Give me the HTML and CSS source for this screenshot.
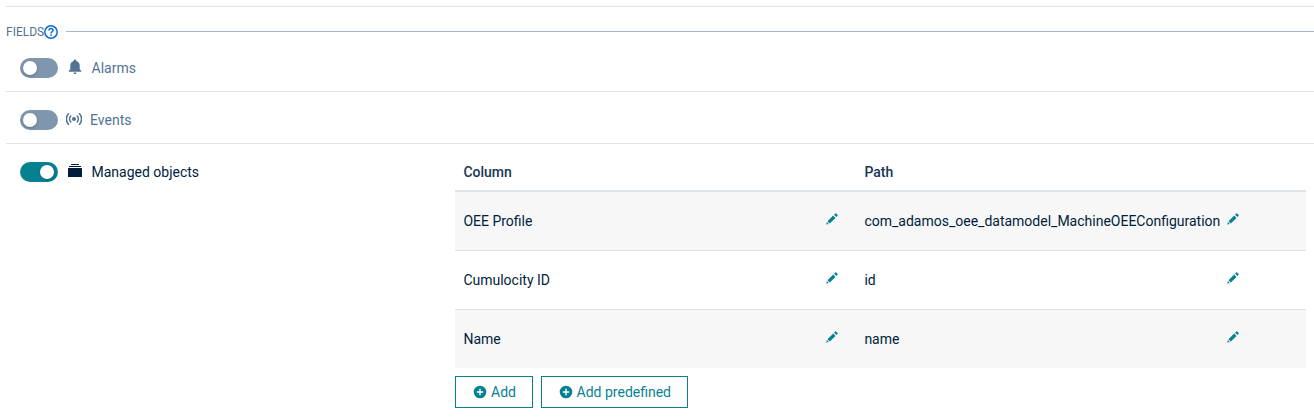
FILE: index.html
```
<!DOCTYPE html>
<html lang="en">
<head>
<meta charset="utf-8">
<title>Fields</title>
<link rel="stylesheet" href="styles.css">
</head>
<body>
<svg class="defs" width="0" height="0">
  <symbol id="pencil" viewBox="0 0 12 12"><path d="M0.2 11.6 .9 9.1 2.8 11ZM1.5 8.3 7.2 2.6 9.5 4.9 3.8 10.6ZM8.1 1.7 9.3.5Q9.8.1 10.2.5L11.6 1.9Q12 2.3 11.6 2.8L10.4 4Z"/></symbol>
  <symbol id="plus" viewBox="0 0 14 14"><path fill-rule="evenodd" d="M7 .7a6.3 6.3 0 1 0 0 12.6A6.3 6.3 0 0 0 7 .7ZM6.3 3.8h1.4v2.5h2.5v1.4H7.7v2.5H6.3V7.7H3.8V6.3h2.5Z"/></symbol>
</svg>
<main class="panel">
  <div class="legend">
    <span>FIELDS</span>
    <svg class="help" viewBox="0 0 14 14"><circle cx="7" cy="7" r="6.2"/><path d="M5 5.5C5 4.3 5.9 3.6 7 3.6S9 4.3 9 5.4C9 6.7 7 6.8 7 8.4"/><path d="M7 9.6V11"/></svg>
    <i class="rule"></i>
  </div>
  <section class="field off">
    <div class="label">
      <span class="switch"></span>
      <svg class="icon bell" viewBox="0 0 14 16"><path d="M7 .4C7.8.4 8.3 1 8.3 1.7V2.1C10.6 2.7 11.7 4.4 11.7 6.5V10.3L13.2 11.8V12.8H.8V11.8L2.3 10.3V6.5C2.3 4.4 3.4 2.7 5.7 2.1V1.7C5.7 1 6.2.4 7 .4ZM5.5 13.5H8.5C8.5 14.5 7.8 15 7 15S5.5 14.5 5.5 13.5Z"/></svg>
      <span>Alarms</span>
    </div>
  </section>
  <section class="field off">
    <div class="label">
      <span class="switch"></span>
      <svg class="icon signal" viewBox="0 0 16 14"><circle cx="8" cy="7" r="2"/><path d="M5.2 3.5A4.6 4.6 0 0 0 5.2 10.5M10.8 3.5A4.6 4.6 0 0 1 10.8 10.5M3 1.3A7.6 7.6 0 0 0 3 12.7M13 1.3A7.6 7.6 0 0 1 13 12.7"/></svg>
      <span>Events</span>
    </div>
  </section>
  <section class="field on">
    <div class="label">
      <span class="switch"></span>
      <svg class="icon stack" viewBox="0 0 14 14"><path d="M3 0h8v1H3ZM1 2h12v1H1ZM.5 4H13.5Q14 4 14 4.5V12.5Q14 13 13.5 13H.5Q0 13 0 12.5V4.5Q0 4 .5 4Z"/></svg>
      <span>Managed objects</span>
    </div>
    <div class="content">
      <div class="table">
        <div class="row head"><span>Column</span><span>Path</span></div>
        <div class="row">
          <span class="name">OEE Profile</span><svg class="edit"><use href="#pencil"/></svg>
          <span class="path">com_adamos_oee_datamodel_MachineOEEConfiguration</span><svg class="edit"><use href="#pencil"/></svg>
        </div>
        <div class="row">
          <span class="name">Cumulocity ID</span><svg class="edit"><use href="#pencil"/></svg>
          <span class="path">id</span><svg class="edit"><use href="#pencil"/></svg>
        </div>
        <div class="row">
          <span class="name">Name</span><svg class="edit"><use href="#pencil"/></svg>
          <span class="path">name</span><svg class="edit"><use href="#pencil"/></svg>
        </div>
      </div>
      <div class="actions">
        <button class="btn add"><svg><use href="#plus"/></svg>Add</button>
        <button class="btn predefined"><svg><use href="#plus"/></svg>Add predefined</button>
      </div>
    </div>
  </section>
</main>
</body>
</html>
```
FILE: styles.css
```
* { box-sizing: border-box; }
body {
  margin: 0;
  background: #fff;
  color: #001d3d;
  font: 14px/20px Roboto, sans-serif;
  overflow: hidden;
}
.defs { display: block; }
.panel { margin: 6px 0 0 6px; border-top: 1px solid #e0e3e8; }
.legend {
  display: flex;
  align-items: center;
  height: 33px;
  padding-top: 16px;
  font-size: 12px;
  color: #527394;
}
.help { width: 14px; height: 14px; fill: none; stroke: #0b6ed8; stroke-width: 1.5; }
.rule { flex: 1; height: 1px; margin-left: 8px; background: #a9b4c8; }
.field { display: flex; height: 52px; padding-top: 18px; border-bottom: 1px solid #e1e3e7; }
.label { display: flex; align-items: center; width: 449px; height: 20px; padding-left: 14px; }
.off { color: #527394; }
.on { height: auto; border: 0; }
.switch {
  width: 38px;
  height: 20px;
  padding: 3px;
  border-radius: 10px;
  background: #7f96ae;
}
.switch::before {
  content: "";
  display: block;
  width: 14px;
  height: 14px;
  border-radius: 50%;
  background: #fff;
  box-shadow: 0 1px 3px rgba(0, 29, 61, .3);
}
.on .switch { background: #058192; }
.on .switch::before { margin-left: 17px; }
.icon { flex: none; fill: currentColor; }
.bell { width: 14px; height: 16px; margin: -2px 9.5px 0 10px; }
.signal { width: 16px; height: 14px; margin: -2px 8px 0; }
.signal path { fill: none; stroke: currentColor; stroke-width: 1.5; }
.stack { width: 14px; height: 14px; margin: -2px 9.5px 0 10px; }
.content { width: 851px; }
.table { margin-top: -8px; }
.row {
  display: grid;
  grid-template-columns: 362.5px 38.5px 362.5px 38px;
  align-items: center;
  height: 59px;
  padding-left: 8.4px;
  border-top: 1px solid #e0e3e8;
}
.row:nth-child(even) { background: #f7f7f7; }
.row.head {
  grid-template-columns: 401px 1fr;
  height: 38px;
  border-top: 0;
  border-bottom: 2px solid #dfe4e9;
  font-weight: 500;
  color: #173653;
}
.row.head + .row { height: 58px; padding-top: 1px; border-top: 0; }
.row.head + .row { height: 59px; margin-bottom: 0; }
.row.head { margin-bottom: -1px; position: relative; }
.edit { width: 12px; height: 12px; margin-top: -4px; fill: #058192; }
.actions { display: flex; gap: 8px; margin-top: 8px; }
.btn {
  display: flex;
  align-items: center;
  height: 32px;
  padding: 0 0 0 17px;
  border: 1px solid #058192;
  background: #fff;
  color: #058192;
  font: inherit;
}
.btn svg { width: 14px; height: 14px; margin-right: 4px; fill: currentColor; }
.add { width: 78px; }
.predefined { width: 147px; padding-left: 16.6px; }
```
